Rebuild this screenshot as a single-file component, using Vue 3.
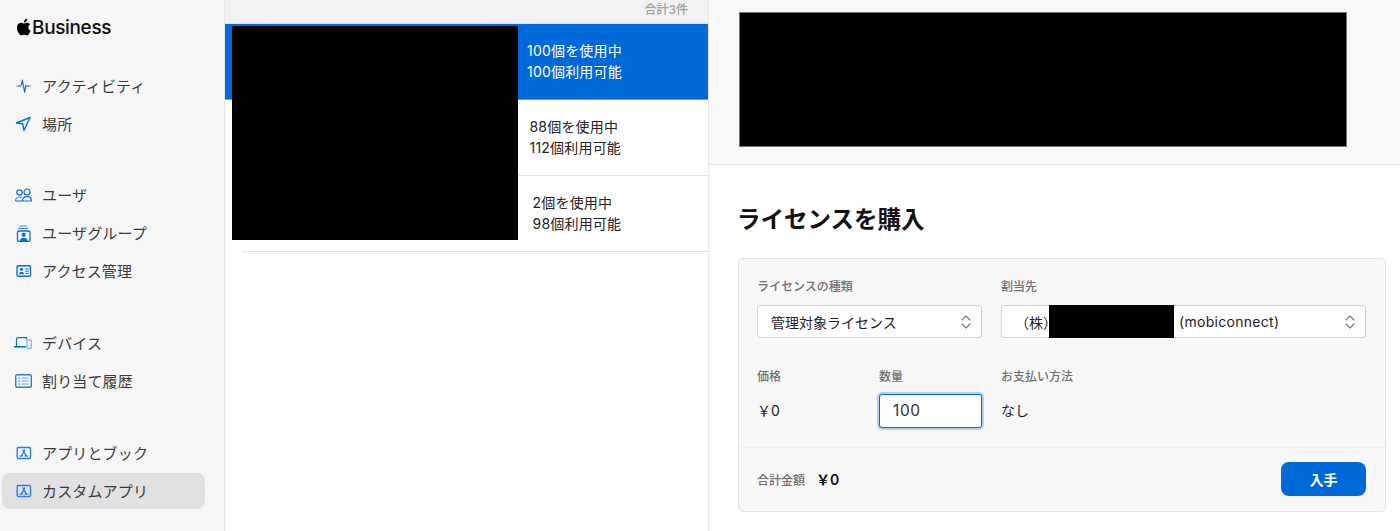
<script setup>
const groups = [
  [
    { label: 'アクティビティ', icon: 'pulse' },
    { label: '場所', icon: 'nav' },
  ],
  [
    { label: 'ユーザ', icon: 'users' },
    { label: 'ユーザグループ', icon: 'group' },
    { label: 'アクセス管理', icon: 'idcard' },
  ],
  [
    { label: 'デバイス', icon: 'devices' },
    { label: '割り当て履歴', icon: 'list' },
  ],
  [
    { label: 'アプリとブック', icon: 'app' },
    { label: 'カスタムアプリ', icon: 'app', active: true },
  ],
]
const rows = [
  { used: '100個を使用中', free: '100個利用可能', selected: true, pad: 'p1' },
  { used: '88個を使用中', free: '112個利用可能', pad: 'p2' },
  { used: '2個を使用中', free: '98個利用可能', pad: 'p3' },
]
</script>

<template>
  <div class="page">
    <aside class="side">
      <div class="brand">
        <svg class="apple" viewBox="0 0 14 17" width="15" height="18">
          <path fill="#000" d="M11.6 9c0-2 1.6-2.900 1.700-3-1-1.400-2.400-1.600-2.900-1.600-1.200-.1-2.400.7-3 .7-.6 0-1.600-.7-2.600-.7C3.400 4.400 2.200 5.200 1.500 6.400.1 8.800 1.100 12.400 2.500 14.400c.7 1 1.500 2 2.500 2 1 0 1.400-.6 2.600-.6s1.500.6 2.600.6c1.100 0 1.800-1 2.400-2 .8-1.100 1.100-2.200 1.100-2.300-.1 0-2.100-.8-2.100-3.100zM9.700 3.100c.5-.7.900-1.600.8-2.500-.8 0-1.700.5-2.300 1.200-.5.600-.9 1.500-.8 2.400.9.100 1.800-.4 2.300-1.100z"/>
        </svg>
        <span class="brand-text">Business</span>
      </div>
      <nav class="nav">
        <div v-for="(g, i) in groups" :key="i" class="group">
          <div v-for="item in g" :key="item.label" class="item" :class="{ active: item.active }">
            <span class="icon">
              <svg v-if="item.icon === 'pulse'" viewBox="0 0 18 18" width="18" height="18" fill="none" stroke="#0a6fdb" stroke-width="1.200" stroke-linecap="round" stroke-linejoin="round">
                <path d="M3 9H6.500L7.500 7.500 8.300 3 10.700 15.500 11.800 8.500 12.800 9H16" />
              </svg>
              <svg v-else-if="item.icon === 'nav'" viewBox="0 0 18 18" width="18" height="18" fill="none" stroke="#0a6fdb" stroke-width="1.400" stroke-linejoin="round">
                <path d="M16 2.500 2.500 8 8.700 8.800 10 15.500Z" />
              </svg>
              <svg v-else-if="item.icon === 'users'" viewBox="0 0 18 18" width="18" height="18" fill="none" stroke="#0a6fdb" stroke-width="1.200">
                <circle cx="5.500" cy="6.500" r="2.700" />
                <circle cx="13" cy="6" r="3" />
                <path d="M1.500 15c0-2.600 1.400-4 4-4 1 0 1.900.3 2.500.9" stroke="#4d94e6" />
                <path d="M1.500 15H17.500c0-2.800-1.800-4.300-4.500-4.300s-4.500 1.500-4.500 4.300" />
              </svg>
              <svg v-else-if="item.icon === 'group'" viewBox="0 0 18 18" width="18" height="18" fill="none" stroke="#0a6fdb" stroke-width="1.300">
                <path d="M5.500 2h7" stroke="#6aa6e8" />
                <path d="M4 4.500h10" stroke="#3d8ae2" />
                <rect x="3.500" y="7" width="12.500" height="10.500" rx="1.200" />
                <circle cx="9.700" cy="10.800" r="2.100" fill="#0a6fdb" stroke="none" />
                <path d="M5.700 17c.2-2.400 1.900-3.200 4-3.200s3.800.8 4 3.200Z" fill="#0a6fdb" stroke="none" />
              </svg>
              <svg v-else-if="item.icon === 'idcard'" viewBox="0 0 18 18" width="18" height="18" fill="none" stroke="#0a6fdb" stroke-width="1.400">
                <rect x="3" y="3.800" width="13.500" height="10.500" rx="1.300" />
                <circle cx="7.500" cy="7.300" r="1.600" fill="#0a6fdb" stroke="none" />
                <path d="M4.800 12.300c.2-1.800 1.300-2.400 2.700-2.400s2.500.6 2.700 2.400Z" fill="#0a6fdb" stroke="none" />
                <path d="M11.300 7h3.300M11.300 9.200h3.300M11.300 11.400h3.300" stroke-width="1" />
              </svg>
              <svg v-else-if="item.icon === 'devices'" viewBox="0 0 18 18" width="18" height="18" fill="none" stroke="#0a6fdb" stroke-width="1.200">
                <path d="M2.500 12V5a1.300 1.300 0 0 1 1.300-1.300H12.500V5.500" />
                <path d="M0 12.800H11.800" stroke-width="1.600" />
                <rect x="13" y="6" width="4.300" height="8.500" rx="1" stroke="#8dbbef" stroke-width="1.400" />
              </svg>
              <svg v-else-if="item.icon === 'list'" viewBox="0 0 18 18" width="18" height="18" fill="none" stroke="#2a7fdf" stroke-width="1.400">
                <rect x="1.700" y="2.700" width="15.600" height="12.500" rx="1.500" />
                <path d="M4.500 6h1.500M4.500 9h1.500M4.500 12h1.500" stroke="#0a6fdb" stroke-width="1.100" />
                <path d="M7.500 6h7M7.500 9h7M7.500 12h7" stroke="#6aa6e8" stroke-width="1.100" />
              </svg>
              <svg v-else viewBox="0 0 18 18" width="18" height="18" fill="none" stroke="#2a7fdf" stroke-width="1.400" stroke-linecap="round">
                <rect x="3.200" y="3.500" width="13.300" height="11" rx="1.300" />
                <path d="M10.800 6 7.300 12M8.900 6 12.400 12M5.900 12H8.300M11 12H13.800" stroke="#0a6fdb" stroke-width="1.200" />
              </svg>
            </span>
            <span class="label">{{ item.label }}</span>
          </div>
        </div>
      </nav>
    </aside>

    <section class="mid">
      <div class="mid-head">合計3件</div>
      <div class="list">
        <div v-for="r in rows" :key="r.used" class="row" :class="[{ selected: r.selected }, r.pad]">
          <div class="row-text">
            <div>{{ r.used }}</div>
            <div>{{ r.free }}</div>
          </div>
        </div>
        <div class="redact-list"></div>
      </div>
    </section>

    <main class="detail">
      <div class="top">
        <div class="redact-top"></div>
      </div>
      <div class="body">
        <h1 class="title">ライセンスを購入</h1>
        <div class="card">
          <div class="form">
            <div class="fields-a">
              <div class="field">
                <div class="flabel">ライセンスの種類</div>
                <div class="select">
                  <span>管理対象ライセンス</span>
                  <svg class="chev" viewBox="0 0 10 14" width="10" height="14" fill="none" stroke="#777" stroke-width="1.100" stroke-linecap="round" stroke-linejoin="round"><path d="M1 5 5 1 9 5M1 9 5 13 9 9" /></svg>
                </div>
              </div>
              <div class="field">
                <div class="flabel">割当先</div>
                <div class="select owner">
                  <span class="owner-a">（株）</span>
                  <span class="redact-owner"></span>
                  <span class="owner-b">(mobiconnect)</span>
                  <svg class="chev" viewBox="0 0 10 14" width="10" height="14" fill="none" stroke="#777" stroke-width="1.100" stroke-linecap="round" stroke-linejoin="round"><path d="M1 5 5 1 9 5M1 9 5 13 9 9" /></svg>
                </div>
              </div>
            </div>
            <div class="fields-b">
              <div class="field price">
                <div class="flabel">価格</div>
                <div class="fval">￥0</div>
              </div>
              <div class="field qty">
                <div class="flabel">数量</div>
                <div class="input">100</div>
              </div>
              <div class="field pay">
                <div class="flabel">お支払い方法</div>
                <div class="fval">なし</div>
              </div>
            </div>
          </div>
          <div class="foot">
            <span class="tlabel">合計金額</span>
            <span class="tval">￥0</span>
            <button class="buy">入手</button>
          </div>
        </div>
      </div>
    </main>
  </div>
</template>

<style>
html, body { margin: 0; background: #fff; overflow: hidden; }
</style>

<style scoped>
.page {
  display: flex;
  height: 531px;
  width: 1400px;
  overflow: hidden;
  font-family: "Inter", "Noto Sans CJK JP", sans-serif;
  color: #1d1d1f;
}
.side {
  width: 224px;
  flex: none;
  background: #f6f6f6;
  border-right: 1px solid #e6e6e6;
}
.brand {
  display: flex;
  align-items: center;
  height: 18px;
  padding: 18px 0 0 16px;
}
.brand-text { font-size: 19px; font-weight: 500; color: #111; letter-spacing: -.35px; margin-left: 1px; }
.nav { padding: 32px 2px 0; }
.group { margin-bottom: 36px; }
.group:first-child { margin-bottom: 35px; }
.item {
  display: flex;
  align-items: center;
  height: 36px;
  margin-bottom: 2px;
  width: 203px;
  border-radius: 8px;
  font-size: 15px;
  letter-spacing: .15px;
  color: #3a3a3c;
}
.item.active { background: #e1e1e3; }
.icon { width: 40px; flex: none; display: flex; padding-left: 12px; box-sizing: border-box; }
.label { white-space: nowrap; margin-bottom: 2px; }

.mid {
  width: 483px;
  flex: none;
  border-right: 1px solid #e8e8e8;
}
.mid-head {
  height: 23px;
  background: #f2f2f2;
  border-bottom: 1px solid #e3e3e3;
  font-size: 12px;
  color: #a0a0a0;
  text-align: right;
  padding-right: 20px;
  line-height: 19px;
  font-weight: 500;
}
.list { position: relative; }
.row {
  height: 75px;
  margin-left: 17px;
  border-bottom: 1px solid #e3e3e3;
  display: flex;
  align-items: center;
  font-size: 14px;
  letter-spacing: .2px;
  line-height: 21px;
  color: #222;
}
.row.selected {
  margin-left: 0;
  background: #0069d9;
  color: #fff;
  border-bottom: 1px solid #5aa0ea;
}
.row-text { white-space: nowrap; margin-bottom: 2px; }
.p1 .row-text { padding-left: 302px; }
.p2 .row-text { padding-left: 287.500px; }
.p3 .row-text { padding-left: 290.500px; }
.redact-list {
  position: absolute;
  left: 7px;
  top: 2px;
  width: 286px;
  height: 214px;
  background: #000;
}

.detail { flex: 1; min-width: 0; }
.top {
  height: 152px;
  background: #f9f9f9;
  border-bottom: 1px solid #e3e3e3;
  padding: 12px 0 0 30px;
}
.redact-top {
  width: 608px;
  height: 135px;
  background: #000;
  outline: 1px solid #777;
  outline-offset: -1px;
}
.body { padding: 0 14px 0 29px; }
.title {
  margin: 0 0 0 -1px;
  padding-top: 40px;
  font-size: 23.500px;
  line-height: 30px;
  font-weight: 700;
  color: #111;
}
.card {
  margin-top: 23px;
  height: 254px;
  box-sizing: border-box;
  background: #f8f8f8;
  border: 1px solid #e4e4e4;
  border-radius: 5px;
  display: flex;
  flex-direction: column;
}
.form { flex: 1; padding: 20px 18px 0; }
.fields-a { display: flex; gap: 19px; }
.fields-a .field:first-child { width: 225px; }
.fields-a .field:last-child { width: 365px; }
.flabel { font-size: 12px; line-height: 16px; color: #707070; font-weight: 500; margin-bottom: 10px; }
.select {
  height: 33px;
  box-sizing: border-box;
  background: #fff;
  border: 1px solid #d4d4d4;
  border-radius: 3px;
  display: flex;
  align-items: center;
  padding-left: 13px;
  font-size: 14px;
  position: relative;
  color: #222;
}
.chev { position: absolute; right: 10px; top: 9px; }
.owner-a { width: 34px; flex: none; white-space: nowrap; }
.redact-owner { width: 125px; height: 33px; background: #000; flex: none; }
.owner-b { margin-left: 5px; letter-spacing: .3px; }
.fields-b { display: flex; margin-top: 31px; }
.fields-b .flabel { margin-bottom: 9px; }
.price { width: 122px; }
.qty { width: 122px; }
.fval { font-size: 14px; line-height: 33px; color: #222; }
.input {
  width: 103px;
  height: 34px;
  box-sizing: border-box;
  background: #fff;
  border: 1px solid #0069d9;
  border-radius: 3px;
  box-shadow: 0 0 0 2px #b3d0f5;
  font-size: 15.500px;
  letter-spacing: .6px;
  line-height: 32px;
  padding-left: 13px;
  color: #333;
}
.foot {
  height: 64px;
  box-sizing: border-box;
  flex: none;
  border-top: 1px solid #efefef;
  display: flex;
  align-items: center;
  padding: 0 19px 1px 18px;
}
.tlabel { font-size: 12px; color: #707070; font-weight: 500; }
.tval { font-size: 14px; font-weight: 600; margin-left: 11px; color: #111; }
.buy {
  margin-left: auto;
  width: 85px;
  height: 34px;
  background: #0069d9;
  border: 0;
  border-radius: 8px;
  color: #fff;
  font-size: 14px;
  font-weight: 600;
  font-family: inherit;
}
</style>
